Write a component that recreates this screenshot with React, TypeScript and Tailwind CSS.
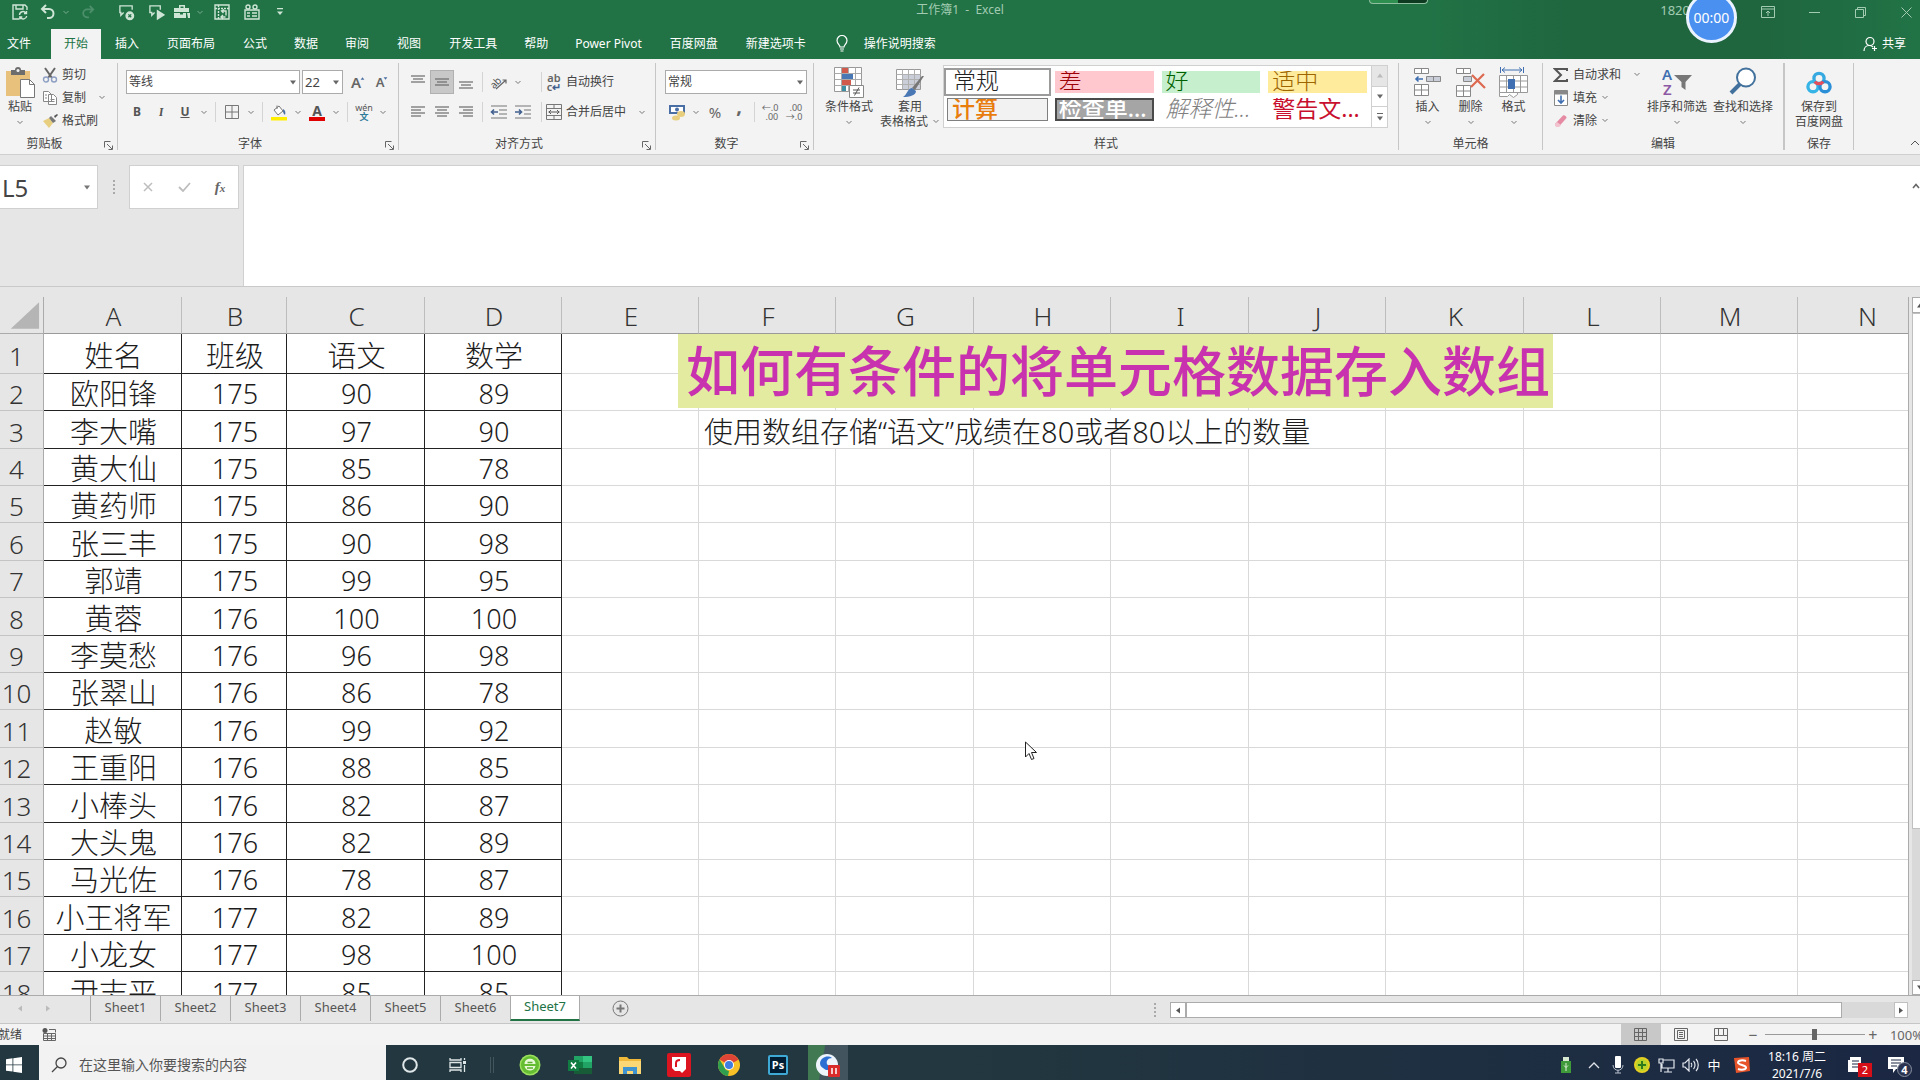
import React, { useState } from 'react';
import clsx from 'clsx';

const MENU_TABS = [
  '文件', '开始', '插入', '页面布局', '公式', '数据', '审阅', '视图',
  '开发工具', '帮助', 'Power Pivot', '百度网盘', '新建选项卡',
];

const COLUMNS = [
  { name: 'A', width: 138 },
  { name: 'B', width: 105 },
  { name: 'C', width: 138 },
  { name: 'D', width: 137 },
  { name: 'E', width: 137 },
  { name: 'F', width: 137 },
  { name: 'G', width: 138 },
  { name: 'H', width: 137 },
  { name: 'I', width: 138 },
  { name: 'J', width: 137 },
  { name: 'K', width: 138 },
  { name: 'L', width: 137 },
  { name: 'M', width: 137 },
  { name: 'N', width: 138 },
];

const ROWS = [
  ['姓名', '班级', '语文', '数学'],
  ['欧阳锋', '175', '90', '89'],
  ['李大嘴', '175', '97', '90'],
  ['黄大仙', '175', '85', '78'],
  ['黄药师', '175', '86', '90'],
  ['张三丰', '175', '90', '98'],
  ['郭靖', '175', '99', '95'],
  ['黄蓉', '176', '100', '100'],
  ['李莫愁', '176', '96', '98'],
  ['张翠山', '176', '86', '78'],
  ['赵敏', '176', '99', '92'],
  ['王重阳', '176', '88', '85'],
  ['小棒头', '176', '82', '87'],
  ['大头鬼', '176', '82', '89'],
  ['马光佐', '176', '78', '87'],
  ['小王将军', '177', '82', '89'],
  ['小龙女', '177', '98', '100'],
  ['尹志平', '177', '85', '85'],
];

const SHEETS = ['Sheet1', 'Sheet2', 'Sheet3', 'Sheet4', 'Sheet5', 'Sheet6', 'Sheet7'];

const Caret = ({ className }: { className?: string }) => (
  <svg viewBox="0 0 8 5" className={clsx('h-[5px] w-2 shrink-0', className)} fill="none" stroke="currentColor">
    <path d="M1.5 1L4 3.5L6.5 1" />
  </svg>
);

const Triangle = ({ className }: { className?: string }) => (
  <svg viewBox="0 0 8 5" className={clsx('h-[5px] w-2 shrink-0', className)} fill="currentColor">
    <path d="M1 0.5h6L4 4.5z" />
  </svg>
);

const Separator = ({ className }: { className?: string }) => (
  <span className={clsx('h-5 w-px shrink-0 bg-[#d4d4d4]', className)} />
);

interface GroupProps {
  label: string;
  className?: string;
  launcher?: boolean;
  children: React.ReactNode;
}

function Group({ label, className, launcher, children }: GroupProps) {
  return (
    <section aria-label={label} className={clsx('flex shrink-0 flex-col border-r border-[#c6c6c6]', className)}>
      <div className="flex h-[69px]">{children}</div>
      <div className={clsx('relative flex h-[18px] items-center justify-center pt-[5px] text-[#444]', launcher && 'pr-4')}>
        {label}
        {launcher && (
          <button aria-label={`${label}设置`} className="absolute right-1 bottom-0">
            <svg viewBox="0 0 9 9" className="size-[9px]" fill="none" stroke="#666">
              <path d="M0.5 6.5V0.5H6.5M3 3l5 5M8.5 4.5v4h-4" />
            </svg>
          </button>
        )}
      </div>
    </section>
  );
}

interface IconButtonProps {
  label: string;
  className?: string;
  children: React.ReactNode;
}

const IconButton = ({ label, className, children }: IconButtonProps) => (
  <button aria-label={label} className={clsx('flex h-6 w-6 shrink-0 items-center justify-center', className)}>
    {children}
  </button>
);

const CaretButton = ({ label }: { label: string }) => (
  <button aria-label={label} className="flex h-6 w-[14px] shrink-0 items-center justify-center text-[#777]">
    <Caret />
  </button>
);

interface BigButtonProps {
  icon: React.ReactNode;
  lines: string[];
  caret?: boolean;
  className?: string;
}

function BigButton({ icon, lines, caret = true, className }: BigButtonProps) {
  return (
    <button className={clsx('flex shrink-0 flex-col items-center pt-1 leading-[15px] whitespace-nowrap', className)}>
      <span className="flex h-8 items-start justify-center">{icon}</span>
      <span>{lines[0]}</span>
      {lines[1] ? (
        <span className="flex items-center gap-1">
          {lines[1]}
          {caret && <Caret className="text-[#777]" />}
        </span>
      ) : (
        caret && <Caret className="mt-[6px] text-[#777]" />
      )}
    </button>
  );
}

/* Horizontal text lines used by the alignment buttons: each entry is x1, x2, y */
const Lines = ({ lines }: { lines: number[][] }) => (
  <svg viewBox="0 0 16 16" className="size-4" stroke="#6b6b6b" strokeWidth="1.2">
    {lines.map(([a, b, y]) => (
      <line key={y} x1={a} x2={b} y1={y} y2={y} />
    ))}
  </svg>
);

function TitleBar() {
  return (
    <div className="flex h-[29px] pb-[5px] text-[#cfe5d6]">
      <div className="flex flex-1 items-center">
        <IconButton label="保存" className="ml-2">
          <svg viewBox="0 0 16 16" className="size-4" fill="none" stroke="currentColor" strokeWidth="1.4">
            <path d="M7 15H1V1h12l2 2v3M4 1v4h7V1" />
            <path d="M7.5 11a3.5 3.5 0 0 1 6.3-2M14.5 7v2.5H12M14.7 12a3.5 3.5 0 0 1-6.3 1.5M7.8 15.5V13h2.5" />
          </svg>
        </IconButton>
        <IconButton label="撤消" className="ml-1">
          <svg viewBox="0 0 16 16" className="size-4" fill="none" stroke="currentColor" strokeWidth="2">
            <path d="M6 1L2 5l4 4M2 5h7a4.5 4.5 0 0 1 0 9H7" />
          </svg>
        </IconButton>
        <Caret className="ml-[2px] opacity-50" />
        <IconButton label="恢复" className="ml-[6px] opacity-25">
          <svg viewBox="0 0 16 16" className="size-[14px]" fill="none" stroke="currentColor" strokeWidth="2">
            <path d="M10 1l4 4-4 4M14 5H7a4.5 4.5 0 0 0 0 9h2" />
          </svg>
        </IconButton>
        <IconButton label="删除批注" className="ml-[14px]">
          <svg viewBox="0 0 18 18" className="size-[17px]" fill="none" stroke="currentColor" strokeWidth="1.4">
            <path d="M6 9L3 12V9H2V2h13v4" />
            <circle cx="12.5" cy="12.5" r="4" fill="currentColor" />
            <path d="M11 11l3 3M14 11l-3 3" stroke="#217346" />
          </svg>
        </IconButton>
        <IconButton label="下一条批注" className="ml-[6px]">
          <svg viewBox="0 0 18 18" className="size-[17px]" fill="none" stroke="currentColor" strokeWidth="1.4">
            <path d="M7 9l-3 3V9H2V2h11v4" />
            <path d="M10 7v9l7-4.500z" fill="currentColor" />
          </svg>
        </IconButton>
        <IconButton label="工具箱" className="ml-[2px]">
          <svg viewBox="0 0 18 16" className="h-4 w-[18px]" fill="currentColor">
            <path d="M6 1h6v3h-1.500V2.500h-3V4H6zM1 4h15v4H1zM1 9h6v1.500h3V9h3v5H1zM14 9h3v5h-2z" />
          </svg>
        </IconButton>
        <Caret className="ml-[2px] opacity-50" />
        <IconButton label="数据透视表" className="ml-[6px]">
          <svg viewBox="0 0 16 16" className="size-4" fill="none" stroke="currentColor" strokeWidth="1.4">
            <path d="M1 1h14v14H1z" />
            <path d="M1 4.500h14M4.500 1v14" strokeDasharray="2 1" />
            <path d="M7.500 7h4.500v4.500M7 13h4.500M10 5.500l-2.500 1.500 2 2M9 11l-2 2 2 2" />
          </svg>
        </IconButton>
        <IconButton label="选项卡" className="ml-[6px]">
          <svg viewBox="0 0 16 16" className="size-4" fill="none" stroke="currentColor" strokeWidth="1.4">
            <path d="M1 6h14v9H1zM3 9h3M3 12h3M8 9h5M8 12h5" />
            <circle cx="4" cy="3" r="2" />
            <circle cx="11" cy="3" r="2" />
          </svg>
        </IconButton>
        <IconButton label="自定义快速访问工具栏" className="ml-1">
          <svg viewBox="0 0 8 8" className="size-2" fill="currentColor">
            <path d="M1 0h6v1.300H1zM1 3.500h6L4 7z" />
          </svg>
        </IconButton>
      </div>
      <h1 className="self-center pb-[5px] text-[#a3cbb2]">工作簿1&nbsp; -&nbsp; Excel</h1>
      <div className="flex flex-1 items-center justify-end text-[#a3cbb2]">
        <span className="mr-[66px] pb-[5px] text-[13px]">1820</span>
        <IconButton label="功能区显示选项" className="mr-[22px]">
          <svg viewBox="0 0 14 12" className="h-3 w-[14px]" fill="none" stroke="currentColor">
            <path d="M0.500 0.500h13v11H0.500zM0.500 3h13M7 10V5M5 7l2-2 2 2" />
          </svg>
        </IconButton>
        <IconButton label="最小化" className="mr-[22px]">
          <span className="h-px w-[11px] bg-current" />
        </IconButton>
        <IconButton label="还原" className="mr-[22px]">
          <svg viewBox="0 0 11 11" className="size-[11px]" fill="none" stroke="currentColor">
            <path d="M0.500 2.500h8v8h-8zM2.500 2.500v-2h8v8h-2" />
          </svg>
        </IconButton>
        <IconButton label="关闭" className="mr-[2px]">
          <svg viewBox="0 0 11 11" className="size-[11px]" stroke="currentColor">
            <path d="M0.500 0.500l10 10M10.500 0.500l-10 10" />
          </svg>
        </IconButton>
      </div>
    </div>
  );
}

interface MenuTabsProps {
  activeTab: string;
  setActiveTab: (tab: string) => void;
}

function MenuTabs({ activeTab, setActiveTab }: MenuTabsProps) {
  return (
    <nav className="flex h-[30px] items-stretch pr-[14px] text-white">
      {MENU_TABS.map((tab, i) => (
        <button
          key={tab}
          onClick={() => setActiveTab(tab)}
          className={clsx(
            'shrink-0 pb-px',
            i === 0 ? 'pr-5 pl-[7px]' : i % 4 === 1 ? 'px-[13px]' : 'px-[14px]',
            tab === activeTab && 'bg-[#f3f3f3] text-[#217346]',
          )}
        >
          {tab}
        </button>
      ))}
      <button className="ml-4 flex items-center gap-4 pb-px">
        <svg viewBox="0 0 12 17" className="h-[17px] w-3" fill="none" stroke="currentColor" strokeWidth="1.2">
          <path d="M4 12c0-2-3-3-3-6.500a5 5 0 0 1 10 0C11 9 8 10 8 12zM4 14h4M4.500 16h3" />
        </svg>
        操作说明搜索
      </button>
      <button className="ml-auto flex items-center gap-1 pb-px">
        <svg viewBox="0 0 15 16" className="h-4 w-[15px]" fill="none" stroke="currentColor" strokeWidth="1.2">
          <circle cx="7" cy="5.500" r="4" />
          <path d="M1 15c0-3 2-5.500 5-5.500 2 0 3 .5 4 1.500M11.500 10v5M9 12.500h5" />
        </svg>
        共享
      </button>
    </nav>
  );
}

function ClipboardGroup() {
  return (
    <Group label="剪贴板" launcher className="-ml-3 w-[130px]">
      <BigButton
        lines={['粘贴']}
        className="ml-[14px] w-9"
        icon={
          <svg viewBox="0 0 30 31" className="h-[31px] w-[30px]">
            <path d="M1 4h24v25H1z" fill="#e8c27c" />
            <path d="M6 3h4a3 3 0 0 1 6 0h4v5H6z" fill="#6d6d6d" />
            <circle cx="13" cy="3.500" r="1.500" fill="#f3f3f3" />
            <path d="M15.500 12.500h9l5 5v13h-14z" fill="#fff" stroke="#777" />
            <path d="M24.500 12.500v5h5" fill="none" stroke="#777" />
          </svg>
        }
      />
      <div className="ml-1 flex flex-col">
        <button className="flex h-[23px] items-center gap-1">
          <svg viewBox="0 0 16 16" className="size-4" fill="none" strokeWidth="1.4">
            <path d="M3 1l7 10M13 1L6 11" stroke="#666" strokeWidth="2" />
            <circle cx="4" cy="12.500" r="2.500" stroke="#8e9fc4" />
            <circle cx="12" cy="12.500" r="2.500" stroke="#8e9fc4" />
          </svg>
          剪切
        </button>
        <button className="flex h-[23px] items-center gap-1">
          <svg viewBox="0 0 16 16" className="size-4" fill="#fff" stroke="#888">
            <path d="M1.500 1.500h5l3 3v7h-8zM6.500 4.500h5l3 3v7h-8z" />
            <path d="M3 5h2M3 8h2M8.500 9.500h4M8.500 11.500h4" />
          </svg>
          复制
          <Caret className="ml-2 text-[#777]" />
        </button>
        <button className="flex h-[23px] items-center gap-1">
          <svg viewBox="0 0 16 16" className="size-4">
            <path d="M1 8l6-3 4 5-4 5z" fill="#e8cf80" />
            <path d="M7 5l2-2 5 5-3 2z" fill="#777" />
            <path d="M12 3l3-2 1 1-3 3z" fill="#555" />
          </svg>
          格式刷
        </button>
      </div>
    </Group>
  );
}

function FontGroup() {
  return (
    <Group label="字体" launcher className="w-[281px]">
      <div className="flex flex-col pt-1 pl-2">
        <div className="flex h-[30px] items-center">
          <div className="relative flex items-center">
            <select aria-label="字体" className="h-6 w-[174px] appearance-none border border-[#ababab] bg-white pl-[2px]">
              <option>等线</option>
            </select>
            <Triangle className="pointer-events-none absolute right-[3px] text-[#666]" />
          </div>
          <div className="relative ml-[2px] flex items-center">
            <select aria-label="字号" className="h-6 w-[41px] appearance-none border border-[#ababab] bg-white pl-[2px] text-[13px]">
              <option>22</option>
            </select>
            <Triangle className="pointer-events-none absolute right-[3px] text-[#666]" />
          </div>
          <IconButton label="增大字号" className="ml-[3px] text-[15px] font-semibold text-[#666]">
            A<Triangle className="mb-2 -ml-px h-[3px] w-[5px] rotate-180 text-[#4a6fa5]" />
          </IconButton>
          <IconButton label="减小字号" className="text-[13px] font-semibold text-[#666]">
            A<Triangle className="mb-2 -ml-px h-[3px] w-[5px] text-[#4a6fa5]" />
          </IconButton>
        </div>
        <div className="-ml-px flex h-[30px] items-center text-[#555]">
          <IconButton label="加粗"><b>B</b></IconButton>
          <IconButton label="倾斜" className="font-serif"><i className="font-bold">I</i></IconButton>
          <IconButton label="下划线"><b className="underline">U</b></IconButton>
          <CaretButton label="下划线选项" />
          <Separator className="mx-1" />
          <IconButton label="边框">
            <svg viewBox="0 0 14 14" className="size-[14px]" fill="none" stroke="#777">
              <path d="M0.500 0.500h13v13H0.500zM7 0.500v13M0.500 7h13" />
            </svg>
          </IconButton>
          <CaretButton label="边框选项" />
          <Separator className="mx-1" />
          <IconButton label="填充颜色">
            <svg viewBox="0 0 16 17" className="h-[17px] w-4">
              <path d="M3 6l5-4 4 5-5 4z" fill="#fff" stroke="#777" />
              <path d="M6 5V1.500" stroke="#777" />
              <path d="M12 5c2 1 3 3 2 6-1-1-2-2-2-4z" fill="#4a6fa5" />
              <path d="M0 13h16v3.500H0z" fill="#ffee00" />
            </svg>
          </IconButton>
          <CaretButton label="填充颜色选项" />
          <IconButton label="字体颜色">
            <span className="flex flex-col items-center">
              <b className="text-[14px] leading-[13px]">A</b>
              <span className="h-1 w-4 bg-[#e00000]" />
            </span>
          </IconButton>
          <CaretButton label="字体颜色选项" />
          <Separator className="mx-1" />
          <IconButton label="拼音">
            <span className="flex flex-col items-center text-[9px] leading-[9px]">
              <span>wén</span>
              <span className="font-bold text-[#2e7c9a]">文</span>
            </span>
          </IconButton>
          <CaretButton label="拼音选项" />
        </div>
      </div>
    </Group>
  );
}

function AlignmentGroup() {
  return (
    <Group label="对齐方式" launcher className="w-[257px]">
      <div className="flex flex-col pt-1 pl-[7px]">
        <div className="flex h-[30px] items-center">
          <IconButton label="顶端对齐"><Lines lines={[[1, 15, 2], [3, 13, 5], [1, 15, 8]]} /></IconButton>
          <IconButton label="垂直居中" className="border border-[#b0b0b0] bg-[#c8c8c8]"><Lines lines={[[1, 15, 5], [3, 13, 8], [1, 15, 11]]} /></IconButton>
          <IconButton label="底端对齐"><Lines lines={[[1, 15, 8], [3, 13, 11], [1, 15, 14]]} /></IconButton>
          <Separator className="mx-1" />
          <IconButton label="方向">
            <svg viewBox="0 0 18 16" className="h-4 w-[18px]" fill="none" stroke="#666" strokeWidth="1.2">
              <path d="M6 15L16 6M12.500 6H16v3.500" />
              <text x="0" y="12" transform="rotate(-45 6 9)" fontSize="10" fill="#555" stroke="none">ab</text>
            </svg>
          </IconButton>
          <CaretButton label="方向选项" />
          <Separator className="mr-1 ml-4" />
        </div>
        <div className="flex h-[30px] items-center">
          <IconButton label="左对齐"><Lines lines={[[1, 15, 3], [1, 11, 6], [1, 15, 9], [1, 11, 12]]} /></IconButton>
          <IconButton label="居中"><Lines lines={[[1, 15, 3], [3, 13, 6], [1, 15, 9], [3, 13, 12]]} /></IconButton>
          <IconButton label="右对齐"><Lines lines={[[1, 15, 3], [5, 15, 6], [1, 15, 9], [5, 15, 12]]} /></IconButton>
          <Separator className="mx-1" />
          <IconButton label="减少缩进量">
            <svg viewBox="0 0 18 14" className="h-[14px] w-[18px]" stroke="#777" strokeWidth="1.2" fill="none">
              <path d="M1 1h16M9 5h8M9 9h8M1 13h16" />
              <path d="M8 7H1.500M4 4.500L1.500 7 4 9.500" stroke="#41608f" strokeWidth="1.6" />
            </svg>
          </IconButton>
          <IconButton label="增加缩进量">
            <svg viewBox="0 0 18 14" className="h-[14px] w-[18px]" stroke="#777" strokeWidth="1.2" fill="none">
              <path d="M1 1h16M10 5h7M10 9h7M1 13h16" />
              <path d="M1 7h6.500M5 4.500L7.500 7 5 9.500" stroke="#41608f" strokeWidth="1.6" />
            </svg>
          </IconButton>
          <Separator className="mr-1 ml-auto" />
        </div>
      </div>
      <div className="flex flex-col pt-1">
        <button className="flex h-[30px] items-center gap-1">
          <span className="flex w-4 flex-col text-[11px] leading-[9px] font-semibold text-[#666]">
            <span>ab</span>
            <span>c<span className="text-[#41608f]">↵</span></span>
          </span>
          自动换行
        </button>
        <button className="flex h-[30px] items-center gap-1">
          <svg viewBox="0 0 16 16" className="size-4" fill="none" stroke="#777">
            <path d="M0.500 0.500h15v15h-15zM0.500 4.500h15M0.500 11.500h15M8 0.500v4M8 11.500v4" />
            <path d="M2.500 8h11M5 6L3 8l2 2M11 6l2 2-2 2" stroke="#555" />
          </svg>
          合并后居中
          <Caret className="ml-2 text-[#777]" />
        </button>
      </div>
    </Group>
  );
}

function NumberGroup() {
  return (
    <Group label="数字" launcher className="w-[158px]">
      <div className="flex flex-col pt-1 pl-[9px]">
        <div className="relative flex h-[30px] items-center">
          <select aria-label="数字格式" className="h-6 w-[142px] appearance-none border border-[#ababab] bg-white pl-[2px]">
            <option>常规</option>
          </select>
          <Triangle className="pointer-events-none absolute right-[3px] text-[#666]" />
        </div>
        <div className="flex h-[30px] items-center text-[#666]">
          <IconButton label="会计数字格式">
            <svg viewBox="0 0 18 17" className="h-[17px] w-[18px]">
              <path d="M1 1h16v9H1z" fill="#4a6fa5" />
              <path d="M3 3h12v5H3z" fill="#fff" />
              <circle cx="9" cy="5.500" r="2" fill="#4a6fa5" />
              <ellipse cx="13" cy="10" rx="4" ry="3" fill="#e8cf80" />
              <ellipse cx="8" cy="14" rx="4" ry="2.500" fill="#e8cf80" />
            </svg>
          </IconButton>
          <CaretButton label="会计格式选项" />
          <IconButton label="百分比样式" className="text-[15px]">%</IconButton>
          <IconButton label="千位分隔样式" className="pb-3 text-[20px] font-bold">,</IconButton>
          <Separator className="mx-[3px]" />
          <IconButton label="增加小数位数">
            <span className="flex flex-col items-end text-[9px] leading-[9px]"><span>←.0</span><span>.00</span></span>
          </IconButton>
          <IconButton label="减少小数位数">
            <span className="flex flex-col items-end text-[9px] leading-[9px]"><span>.00</span><span>→.0</span></span>
          </IconButton>
        </div>
      </div>
    </Group>
  );
}

function StylesGroup() {
  return (
    <Group label="样式" className="w-[585px]">
      <BigButton
        lines={['条件格式']}
        className="ml-[6px] w-[58px]"
        icon={
          <svg viewBox="0 0 30 31" className="h-[31px] w-[30px]">
            <path d="M0.500 0.500h27v24h-27z" fill="#fff" stroke="#999" />
            <path d="M0.500 6.500h27M0.500 12.500h27M0.500 18.500h27M7.500 0.500v24M14.500 0.500v24M21.500 0.500v24" stroke="#aaa" />
            <path d="M8 1h6v5H8zM8 13h9v5H8z" fill="#d05a4c" />
            <path d="M8 7h11v5H8z" fill="#4a78b5" />
            <path d="M8 19h4v5H8z" fill="#3d8fa3" />
            <path d="M15.500 18.500h14v12h-14z" fill="#fff" stroke="#888" />
            <path d="M19 23h7M19 26h7M25 20.500l-4.500 8" stroke="#555" />
          </svg>
        }
      />
      <BigButton
        lines={['套用', '表格格式']}
        className="ml-[2px] w-[60px]"
        icon={
          <svg viewBox="0 0 30 31" className="h-[31px] w-[30px]">
            <path d="M1.500 2.500h24v20h-24z" fill="#fff" stroke="#999" />
            <path d="M7 7h18v15H7z" fill="#c9ced9" />
            <path d="M1.500 7.500h24M1.500 12.500h24M1.500 17.500h24M7.500 2.500v20M13.500 2.500v20M19.500 2.500v20" stroke="#b0b0b0" />
            <path d="M29 9l-9 14-3-2L27 9z" fill="#777" />
            <path d="M17 21l4 3c0 4-6 6-13 6 4-2 4-8 9-9z" fill="#4a78b5" />
          </svg>
        }
      />
      <div className="mt-[2px] mr-[10px] ml-[3px] flex h-[63px] min-w-0 flex-1 self-start border border-[#d0d0d0] bg-white">
        <div className="grid flex-1 grid-cols-4 grid-rows-2 text-[23px] leading-[20px] font-light">
          <button className="mt-[2px] flex h-[28px] items-center overflow-hidden border-2 border-[#9b9b9b] pb-1 pl-[7px] text-[#222]">常规</button>
          <button className="mx-1 mt-[5px] flex h-[22px] items-center overflow-hidden bg-[#ffc7ce] pb-1 pl-1 text-[#9c0006]">差</button>
          <button className="mx-1 mt-[5px] flex h-[22px] items-center overflow-hidden bg-[#c6efce] pb-1 pl-1 text-[#006100]">好</button>
          <button className="mx-1 mt-[5px] flex h-[22px] items-center overflow-hidden bg-[#ffeb9c] pb-1 pl-1 text-[#9c6500]">适中</button>
          <button className="mx-[3px] mt-px flex h-[23px] items-center overflow-hidden border border-[#7f7f7f] bg-[#f2f2f2] pb-[2px] pl-1 font-medium text-[#e87d0e]">计算</button>
          <button className="mx-1 mt-px flex h-[23px] items-center overflow-hidden border-2 border-[#4a4a4a] bg-[#a5a5a5] pb-[2px] pl-[2px] font-medium whitespace-nowrap text-white">检查单...</button>
          <button className="mx-1 mt-px flex h-[23px] items-center overflow-hidden pb-[2px] pl-1 whitespace-nowrap text-[#7f7f7f] italic">解释性...</button>
          <button className="mx-1 mt-px flex h-[23px] items-center overflow-hidden pb-[2px] pl-1 font-normal whitespace-nowrap text-[#c8102e]">警告文...</button>
        </div>
        <div className="flex w-4 flex-col divide-y divide-[#d0d0d0] border-l border-[#d0d0d0] text-[#666]">
          <button aria-label="上一行" className="flex flex-1 items-center justify-center bg-[#e6e6e6] text-[#bbb]"><Triangle className="rotate-180" /></button>
          <button aria-label="下一行" className="flex flex-1 items-center justify-center"><Triangle /></button>
          <button aria-label="其他" className="flex flex-1 flex-col items-center justify-center gap-[2px]"><span className="h-px w-[6px] bg-current" /><Triangle /></button>
        </div>
      </div>
    </Group>
  );
}

function CellsGroup() {
  return (
    <Group label="单元格" className="w-[144px]">
      <BigButton
        lines={['插入']}
        className="ml-[7px] w-[43px]"
        icon={
          <svg viewBox="0 0 27 30" className="h-[30px] w-[27px]" fill="#fff" stroke="#888">
            <path d="M0.500 1.500h14v5h-14zM7.500 1.500v5M0.500 17.500h14v11h-14zM7.500 17.500v11M0.500 23h14" />
            <path d="M12.500 9.500h14v5h-14zM19.500 9.500v5" fill="#c9ced9" />
            <path d="M9 12H2M4.500 9.500L2 12l2.500 2.500" fill="none" stroke="#3f6fb0" strokeWidth="1.6" />
          </svg>
        }
      />
      <BigButton
        lines={['删除']}
        className="w-[43px]"
        icon={
          <svg viewBox="0 0 30 30" className="h-[30px] w-[30px]" fill="#fff" stroke="#888">
            <path d="M0.500 1.500h14v5h-14zM7.500 1.500v5M0.500 18.500h14v11h-14zM7.500 18.500v11M0.500 24h14" />
            <path d="M7.500 9.500h8v5h-8z" fill="#c9ced9" />
            <path d="M16 8l13 13M28 7L15 20" stroke="#dd6a50" strokeWidth="2.2" />
          </svg>
        }
      />
      <BigButton
        lines={['格式']}
        className="w-[43px]"
        icon={
          <svg viewBox="0 0 29 31" className="h-[31px] w-[29px]" fill="#fff" stroke="#999">
            <path d="M0.500 8.500h28v17h-28zM0.500 14h28M0.500 20h28M7.500 8.500v17M14.500 8.500v17M21.500 8.500v17M0.500 25.500v4h8l2-2 4 3 4-3v-2" />
            <path d="M9 12h7v10H9z" fill="#3f6fb0" stroke="none" />
            <path d="M3 3h20M6 0.500L3 3l3 2.500M20 0.500L23 3l-3 2.500M1.500 0v6M24.500 0v6" fill="none" stroke="#3f6fb0" />
          </svg>
        }
      />
    </Group>
  );
}

function EditingGroup() {
  return (
    <Group label="编辑" className="w-[241px]">
      <div className="ml-[10px] flex w-[91px] flex-col">
        <button className="flex h-[23px] items-center gap-1">
          <svg viewBox="0 0 16 16" className="size-4" fill="none" stroke="#555" strokeWidth="2">
            <path d="M14 4V2H2l6 6-6 6h12v-2" />
          </svg>
          自动求和
          <Caret className="ml-2 text-[#777]" />
        </button>
        <button className="flex h-[23px] items-center gap-1">
          <svg viewBox="0 0 16 16" className="size-4" fill="#fff" stroke="#888">
            <path d="M1.500 0.500h13v15h-13z" />
            <path d="M1.500 1h13v3h-13z" fill="#888" />
            <path d="M8 5.500v7.500M5 10l3 3 3-3" fill="none" stroke="#3f6fb0" strokeWidth="1.6" />
          </svg>
          填充
          <Caret className="text-[#777]" />
        </button>
        <button className="flex h-[23px] items-center gap-1">
          <svg viewBox="0 0 16 16" className="size-4">
            <path d="M2 11l8-8.500c1-1 4 1 3.500 2.500L6 13.500H3z" fill="#e58aa2" />
            <path d="M2 11l2-2 4 3-2 2H3z" fill="#f2c3cf" />
          </svg>
          清除
          <Caret className="text-[#777]" />
        </button>
      </div>
      <BigButton
        lines={['排序和筛选']}
        className="w-[66px]"
        icon={
          <svg viewBox="0 0 30 30" className="h-[30px] w-[30px]" fontFamily="Noto Sans" fontWeight="600" fontSize="15">
            <text x="0" y="13" fill="#3f6fb0">A</text>
            <text x="1" y="28" fill="#8c5aa5">Z</text>
            <path d="M12 8h18l-6.500 7v8l-4-3v-5z" fill="#777" />
          </svg>
        }
      />
      <BigButton
        lines={['查找和选择']}
        className="w-[66px]"
        icon={
          <svg viewBox="0 0 28 28" className="h-[28px] w-[28px]" fill="#fff" stroke="#41719c">
            <path d="M11 17L2 26" strokeWidth="4" />
            <circle cx="17" cy="10.500" r="9" strokeWidth="2" />
          </svg>
        }
      />
    </Group>
  );
}

function Ribbon() {
  return (
    <div className="flex h-24 border-b border-[#cfcfcf] bg-[#f3f3f3] py-1 text-[#444]">
      <ClipboardGroup />
      <FontGroup />
      <AlignmentGroup />
      <NumberGroup />
      <StylesGroup />
      <CellsGroup />
      <EditingGroup />
      <Group label="保存" className="w-[70px] border-l">
        <BigButton
          lines={['保存到', '百度网盘']}
          caret={false}
          className="w-full"
          icon={
            <svg viewBox="0 0 28 26" className="mt-1 h-[24px] w-[28px]" fill="none" strokeWidth="3.600">
              <circle cx="14" cy="8" r="5.500" stroke="#36a9e1" />
              <circle cx="7.500" cy="17" r="5.500" stroke="#36b4e6" />
              <circle cx="20.500" cy="17" r="5.500" stroke="#2b8fd8" />
              <path d="M9.500 11.500c2 3 7 3 9 0" stroke="#e34d5c" />
            </svg>
          }
        />
      </Group>
      <button aria-label="折叠功能区" className="ml-auto self-end pb-1 text-[#555]">
        <svg viewBox="0 0 10 6" className="h-[6px] w-[10px]" fill="none" stroke="currentColor">
          <path d="M1 5l4-4 4 4" />
        </svg>
      </button>
    </div>
  );
}

function FormulaBar() {
  return (
    <div className="flex h-[132px] items-start border-b border-[#c9c9c9] bg-[#e6e6e6] pt-[10px]">
      <div className="relative flex items-center">
        <input
          aria-label="名称框"
          defaultValue="L5"
          className="h-11 w-[98px] border border-l-0 border-[#d0d0d0] bg-white pl-[2px] text-[24px] text-[#444] outline-none"
        />
        <Triangle className="absolute right-[7px] text-[#777]" />
      </div>
      <svg viewBox="0 0 3 16" className="mx-[14px] mt-[14px] h-4 w-[3px]" fill="#aaa">
        <path d="M1 1h2v2H1zM1 5h2v2H1zM1 9h2v2H1zM1 13h2v2H1z" />
      </svg>
      <div className="flex h-11 w-[110px] items-center justify-around border border-[#d0d0d0] bg-white text-[#bdbdbd]">
        <IconButton label="取消">
          <svg viewBox="0 0 10 10" className="size-[10px]" stroke="currentColor" strokeWidth="1.500"><path d="M1 1l8 8M9 1l-8 8" /></svg>
        </IconButton>
        <IconButton label="输入">
          <svg viewBox="0 0 13 10" className="h-[10px] w-[13px]" fill="none" stroke="currentColor" strokeWidth="1.800"><path d="M1 5l4 4 7-8" /></svg>
        </IconButton>
        <IconButton label="插入函数" className="font-['Liberation_Serif',serif] text-[15px] text-[#666] italic">
          <b>f<span className="text-[11px]">x</span></b>
        </IconButton>
      </div>
      <div className="relative ml-1 flex flex-1">
        <textarea aria-label="编辑栏" className="h-[121px] flex-1 resize-none border-t border-l border-[#d0d0d0] bg-white outline-none" />
        <button aria-label="折叠编辑栏" className="absolute top-[18px] right-0 text-[#666]">
          <svg viewBox="0 0 8 6" className="h-[6px] w-2" fill="none" stroke="currentColor" strokeWidth="1.600"><path d="M1 5l3-3.500L7 5" /></svg>
        </button>
      </div>
    </div>
  );
}

function Worksheet() {
  return (
    <div className="flex min-h-0 flex-1 bg-[#e6e6e6] pt-[10px]">
      <div className="relative min-w-0 flex-1 overflow-hidden border-r border-[#ababab]">
        <table className="w-max table-fixed border-separate border-spacing-0 bg-white text-[27px] leading-[30px] font-light text-[#1c1c1c]">
          <colgroup>
            <col className="w-11" />
            {COLUMNS.map((col) => (
              <col key={col.name} style={{ width: col.width }} />
            ))}
          </colgroup>
          <thead>
            <tr className="h-[37px] bg-[#e6e6e6] text-[26px] text-[#333]">
              <th aria-label="全选" className="w-11 border-r border-b border-[#ababab] p-0">
                <svg viewBox="0 0 44 36" className="h-9 w-[43px]"><path d="M40 5v27H11z" fill="#b5b5b5" /></svg>
              </th>
              {COLUMNS.map((col) => (
                <th key={col.name} scope="col" className="border-r border-b border-r-[#bdbdbd] border-b-[#9a9a9a] p-0 pt-[2px] pl-[2px] font-light">
                  {col.name}
                </th>
              ))}
            </tr>
          </thead>
          <tbody>
            {ROWS.map((row, i) => (
              <tr key={row[0]} className={i === 0 ? 'h-10' : i % 5 === 0 || i % 5 === 2 ? 'h-[38px]' : 'h-[37px]'}>
                <th scope="row" className="border-r border-b border-[#c4c4c4] border-r-[#ababab] bg-[#e6e6e6] p-0 pt-1 pr-[10px] text-[26px] font-light text-[#333]">
                  <span className="flex justify-center">{i + 1}</span>
                </th>
                {row.map((cell, j) => (
                  <td key={j} className={clsx('border-r border-b border-[#222] p-0 pt-1 pl-[2px] text-center whitespace-nowrap', /\d/.test(cell) ? '' : 'text-[29px]')}>
                    {cell}
                  </td>
                ))}
                {COLUMNS.slice(4).map((col, j) => {
                  // the note in F3 runs across to column J
                  if (i === 2 && j > 1 && j < 6) return null;
                  if (i === 2 && j === 1) {
                    return (
                      <td key={col.name} colSpan={5} className="border-r border-b border-[#d9d9d9] p-0 pt-1 pl-[5px] text-[29px] whitespace-nowrap">
                        使用数组存储“语文”成绩在80或者80以上的数量
                      </td>
                    );
                  }
                  return <td key={col.name} className="border-r border-b border-[#d9d9d9] p-0" />;
                })}
              </tr>
            ))}
          </tbody>
        </table>
        <div className="absolute top-[37px] left-[678px] flex h-[74px] items-center bg-[#e2eb9f] pr-[3px] pl-2 text-[54px] font-medium whitespace-nowrap text-[#c832ae]">
          如何有条件的将单元格数据存入数组
        </div>
        <svg viewBox="0 0 12 19" className="absolute top-[444px] left-[1025px] h-[19px] w-3" fill="#fff" stroke="#222">
          <path d="M0.500 1v15l3.500-3.500 2.500 6 2.500-1-2.500-6h5z" />
        </svg>
      </div>
      <div className="ml-[3px] flex w-2 shrink-0 flex-col overflow-hidden bg-[#d9d9d9]">
        <button aria-label="向上滚动" className="flex h-4 w-4 items-center justify-center border border-[#ababab] bg-white text-[#555]"><Triangle className="rotate-180" /></button>
        <div className="h-[516px] w-4 shrink-0 border border-[#c0c0c0] bg-white" />
        <button aria-label="向下滚动" className="mt-auto flex h-[15px] w-4 items-center justify-center border border-[#ababab] bg-white text-[#555]"><Triangle /></button>
      </div>
    </div>
  );
}

function SheetBar() {
  const [activeSheet, setActiveSheet] = useState('Sheet7');

  return (
    <div className="flex h-7 shrink-0 items-start border-t border-[#ababab] bg-[#e6e6e6] text-[#555]">
      <div className="flex h-[25px] w-[90px] items-center gap-5 pl-4 text-[#bbb]">
        <Triangle className="rotate-90" />
        <Triangle className="-rotate-90" />
      </div>
      {SHEETS.map((sheet) => (
        <button
          key={sheet}
          onClick={() => setActiveSheet(sheet)}
          className={clsx(
            'h-[25px] w-[70px] border-l border-[#ababab] pb-1 text-[13px]',
            sheet === activeSheet && 'border-r border-b-2 border-b-[#217346] bg-white text-[#217346]',
          )}
        >
          {sheet}
        </button>
      ))}
      <button aria-label="新工作表" className="mt-1 ml-8 text-[#777]">
        <svg viewBox="0 0 17 17" className="size-[17px]" fill="none" stroke="currentColor">
          <circle cx="8.500" cy="8.500" r="7.500" />
          <path d="M8.500 4.500v8M4.500 8.500h8" strokeWidth="2" />
        </svg>
      </button>
      <svg viewBox="0 0 3 16" className="mt-[6px] ml-auto h-4 w-[3px]" fill="#aaa">
        <path d="M1 1h2v2H1zM1 5h2v2H1zM1 9h2v2H1zM1 13h2v2H1z" />
      </svg>
      <div className="mt-[6px] mr-3 ml-[14px] flex h-4 w-[738px] bg-[#d9d9d9]">
        <button aria-label="向左滚动" className="flex w-4 items-center justify-center border border-[#ababab] bg-white text-[#555]"><Triangle className="rotate-90" /></button>
        <div className="mr-[52px] flex-1 border border-[#ababab] bg-white" />
        <button aria-label="向右滚动" className="flex w-[14px] items-center justify-center border border-[#c0c0c0] bg-white text-[#555]"><Triangle className="-rotate-90" /></button>
      </div>
    </div>
  );
}

function StatusBar() {
  return (
    <div className="flex h-[22px] shrink-0 items-center overflow-hidden border-t border-[#c6c6c6] bg-[#f3f3f3] text-[#444]">
      <span className="-ml-[2px]">就绪</span>
      <svg viewBox="0 0 14 13" className="ml-5 h-[13px] w-[14px]" fill="none" stroke="#666">
        <path d="M1.500 5.500h12v7h-12zM1.500 8h12M1.500 10.500h12M5.500 5.500v7M9.500 5.500v7M7 1.500h6.500v3" />
        <circle cx="3" cy="2.500" r="2.500" fill="#555" stroke="none" />
      </svg>
      <div className="ml-auto flex h-full items-center text-[#666]">
        <button aria-label="普通视图" className="flex h-full w-10 items-center justify-center bg-[#c8c8c8]">
          <svg viewBox="0 0 13 13" className="size-[13px]" fill="none" stroke="currentColor"><path d="M0.500 0.500h12v12h-12zM4.500 0.500v12M8.500 0.500v12M0.500 4.500h12M0.500 8.500h12" /></svg>
        </button>
        <button aria-label="页面布局视图" className="flex h-full w-10 items-center justify-center">
          <svg viewBox="0 0 14 13" className="h-[13px] w-[14px]" fill="none" stroke="currentColor"><path d="M0.500 0.500h13v12h-13zM3.500 2.500h7v8h-7zM5 4.500h4M5 6.500h4M5 8.500h4" /></svg>
        </button>
        <button aria-label="分页预览" className="flex h-full w-10 items-center justify-center">
          <svg viewBox="0 0 14 13" className="h-[13px] w-[14px]" fill="none" stroke="currentColor"><path d="M0.500 0.500h13v12h-13zM4.500 0.500v7h5v-7M0.500 7.500h4M9.500 7.500h4" /></svg>
        </button>
        <button aria-label="缩小" className="w-6 text-[16px] leading-4">−</button>
        <input
          aria-label="显示比例"
          type="range"
          defaultValue={50}
          className="h-4 w-[100px] appearance-none bg-[linear-gradient(#9a9a9a,#9a9a9a)] bg-[length:100%_1px] bg-center bg-no-repeat [&::-webkit-slider-thumb]:h-[11px] [&::-webkit-slider-thumb]:w-[5px] [&::-webkit-slider-thumb]:appearance-none [&::-webkit-slider-thumb]:bg-[#666]"
        />
        <button aria-label="放大" className="w-4 text-[16px] leading-4">+</button>
        <span className="-mr-[3px] ml-[9px] text-[13px]">100%</span>
      </div>
    </div>
  );
}

function Taskbar() {
  return (
    <footer className="h-[35px] shrink-0 overflow-hidden">
      <div className="flex h-10 items-center bg-gradient-to-r from-[#22373f] from-50% to-[#1b2743] text-white">
        <button aria-label="开始" className="flex h-full w-[39px] items-center pl-[6px]">
          <svg viewBox="0 0 16 16" className="size-4" fill="#fff"><path d="M0 2.200l6.500-.9v6.200H0zM7.300 1.200L16 0v7.500H7.300zM0 8.300h6.500v6.300L0 13.700zM7.300 8.300H16V16l-8.700-1.200z" /></svg>
        </button>
        <label className="flex h-full w-[347px] items-center bg-[#f2f2f2] pl-[12px]">
          <svg viewBox="0 0 16 16" className="size-4" fill="none" stroke="#444" strokeWidth="1.300"><circle cx="10" cy="6" r="5" /><path d="M6.500 9.500L1 15" /></svg>
          <input aria-label="搜索" placeholder="在这里输入你要搜索的内容" className="ml-3 flex-1 bg-transparent text-[14px] outline-none placeholder:text-[#555]" />
        </label>
        <IconButton label="Cortana" className="ml-[12px]">
          <svg viewBox="0 0 16 16" className="size-4" fill="none" stroke="#dfe6e8" strokeWidth="2"><circle cx="8" cy="8" r="6.800" /></svg>
        </IconButton>
        <IconButton label="任务视图" className="ml-6">
          <svg viewBox="0 0 18 16" className="h-4 w-[18px]" fill="none" stroke="#dfe6e8" strokeWidth="1.300"><path d="M1 1v2h11V1M1 5.500h11v5H1zM1 15v-2h11v2M15.500 1v2M15.500 8v7" /><path d="M14 4h3v3h-3z" fill="#dfe6e8" stroke="none" /></svg>
        </IconButton>
        <span className="ml-5 h-4 w-[4px] border-x border-[#44565d]" />
        <IconButton label="浏览器" className="ml-6">
          <svg viewBox="0 0 22 22" className="size-[22px]"><circle cx="11" cy="11" r="10.500" fill="#9be05f" /><circle cx="11" cy="11" r="9" fill="#65bd32" /><path d="M5.500 10c0-7 11-7 11 0z" fill="#e8f9d8" /><path d="M5.500 12h11c-1 6-10 6-11 0z" fill="#e8f9d8" /><path d="M8.500 8.500h5M8 14h6" stroke="#5cb030" strokeWidth="1.500" /></svg>
        </IconButton>
        <IconButton label="Excel" className="ml-[26px]">
          <svg viewBox="0 0 24 20" className="h-5 w-6"><path d="M6 1h18v18H6z" fill="#21a366" /><path d="M15 1h9v6h-9z" fill="#33c481" /><path d="M6 7h9v6H6z" fill="#107c41" /><path d="M6 13h18v6H6z" fill="#185c37" /><path d="M0 5h11v11H0z" fill="#107c41" /><path d="M3 7.500l5 6M8 7.500l-5 6" stroke="#fff" strokeWidth="1.600" /></svg>
        </IconButton>
        <IconButton label="文件资源管理器" className="ml-[26px]">
          <svg viewBox="0 0 22 18" className="h-[18px] w-[22px]"><path d="M0 1h8l2 2h12v15H0z" fill="#f0b93a" /><path d="M0 5h22v13H0z" fill="#fbd775" /><path d="M4 18v-7h14v7h-4v-3H8v3z" fill="#3f93cf" /></svg>
        </IconButton>
        <IconButton label="录屏" className="ml-[25px]">
          <svg viewBox="0 0 24 24" className="size-6"><rect width="24" height="24" rx="2" fill="#dc1420" /><path d="M5 4h14v12l-4 4-2-2H8l-3-3z" fill="#fff" /><path d="M9 14V10c0-2 1.500-3 4-3" stroke="#dc1420" strokeWidth="2" fill="none" /></svg>
        </IconButton>
        <IconButton label="Chrome" className="ml-[26px]">
          <svg viewBox="0 0 22 22" className="size-[22px]"><circle cx="11" cy="11" r="11" fill="#f6c026" /><path d="M11 11L1.500 5.500A11 11 0 0 1 20.500 5.500z" fill="#de4536" /><path d="M20.500 5.500H11v5z" fill="#de4536" /><path d="M1.500 5.500L8 16l3 1-1 5A11 11 0 0 1 1.500 5.500z" fill="#2f9e4f" /><circle cx="11" cy="11" r="5" fill="#fff" /><circle cx="11" cy="11" r="4" fill="#3f7de0" /></svg>
        </IconButton>
        <IconButton label="Photoshop" className="ml-[25px]">
          <span className="flex size-5 items-center justify-center rounded-[2px] border-2 border-[#3fa9d6] bg-[#001d33] text-[11px] font-bold">Ps</span>
        </IconButton>
        <button aria-label="录制中" className="ml-[18px] flex h-full w-10 items-center justify-center bg-[linear-gradient(100deg,#417a52_35%,#42545e_38%)]">
          <svg viewBox="0 0 24 24" className="size-6"><circle cx="11" cy="12" r="11" fill="#eef4fb" /><path d="M4 10c1-6 8-8 12-5-4 0-6 3-5 6 1 2 4 3 7 2-4 5-8 5-11 2-2-1-3-3-3-5z" fill="#2d6fd2" /><rect x="12" y="12" width="12" height="12" rx="1" fill="#d92b2b" /><path d="M16 15v6M20 15v6" stroke="#fff" strokeWidth="1.500" /></svg>
        </button>
        <div className="ml-auto flex items-center">
          <IconButton label="USB">
            <svg viewBox="0 0 10 16" className="h-4 w-[10px]"><path d="M2 0h6v4H2z" fill="#d7e8d0" /><path d="M0 4h10v12H0z" fill="#3f9b3a" /><path d="M5 6v8M3 8.500l2 2 2-2" stroke="#dff0d8" fill="none" /></svg>
          </IconButton>
          <IconButton label="显示隐藏的图标" className="ml-1">
            <svg viewBox="0 0 12 8" className="h-2 w-3" fill="none" stroke="#dfe3ea" strokeWidth="1.300"><path d="M1 7l5-5 5 5" /></svg>
          </IconButton>
          <IconButton label="麦克风">
            <svg viewBox="0 0 12 18" className="h-[18px] w-3"><rect x="3" width="6" height="12" rx="1" fill="#fff" /><path d="M1 9c0 7 10 7 10 0M6 14v3M3 17h6" fill="none" stroke="#b8c0cc" /></svg>
          </IconButton>
          <IconButton label="安全卫士">
            <svg viewBox="0 0 16 16" className="size-4"><circle cx="8" cy="8" r="8" fill="#e5cf20" /><circle cx="8" cy="8" r="6" fill="#b9d32c" /><path d="M8 4v8M4 8h8" stroke="#2d7a1d" strokeWidth="2" /></svg>
          </IconButton>
          <IconButton label="网络">
            <svg viewBox="0 0 17 15" className="h-[15px] w-[17px]" fill="none" stroke="#e3e7ee" strokeWidth="1.200"><path d="M5 2h11v8H4V6M10 10v4M6 14h8M1 1h4v4H1zM3 5v9" /></svg>
          </IconButton>
          <IconButton label="音量">
            <svg viewBox="0 0 17 14" className="h-[14px] w-[17px]" fill="none" stroke="#e3e7ee" strokeWidth="1.200"><path d="M1 5h2l4-4v12L3 9H1zM9 5c1 1 1 3 0 4M11.500 3c2 2 2 6 0 8M14 1c3 3 3 9 0 12" /></svg>
          </IconButton>
          <button className="w-6 text-[13px]">中</button>
          <IconButton label="搜狗输入法" className="ml-1">
            <svg viewBox="0 0 16 16" className="size-4"><path d="M0 1l15-1 1 14-14 2z" fill="#e8542a" /><path d="M12 4c-3-1-8-1-8 1.500S12 8 12 10.500 7 13 4 12" fill="none" stroke="#fff" strokeWidth="2" /></svg>
          </IconButton>
          <div className="mx-3 w-[62px] text-center leading-[17px] whitespace-nowrap">
            <div>18:16 周二</div>
            <div>2021/7/6</div>
          </div>
          <button aria-label="便笺" className="relative ml-2 size-6">
            <svg viewBox="0 0 16 16" className="size-4" fill="#fff"><path d="M2 0h11v15H0V3h2z" /><path d="M4 4h7M4 7h7M4 10h7" stroke="#1b2743" /></svg>
            <span className="absolute right-0 bottom-0 flex size-[14px] items-center justify-center bg-[#d40f18] text-[11px]">2</span>
          </button>
          <button aria-label="通知" className="relative mr-2 ml-4 size-6">
            <svg viewBox="0 0 17 17" className="size-[17px]" fill="#fff"><path d="M0 0h16v12H8l-3 4v-4H0z" /><path d="M3 3h10M3 6h10M3 9h6" stroke="#1b2743" /></svg>
            <span className="absolute right-0 bottom-0 flex size-[15px] items-center justify-center rounded-full border border-[#8890a0] bg-[#2a3450] text-[11px] font-bold">4</span>
          </button>
        </div>
      </div>
    </footer>
  );
}

export default function App() {
  const [activeTab, setActiveTab] = useState('开始');

  return (
    <div
      lang="zh-CN"
      className="relative flex h-screen flex-col overflow-hidden font-['Noto_Sans','Noto_Sans_CJK_SC',sans-serif] text-[12px] leading-4"
    >
      <header className="shrink-0 bg-[linear-gradient(90deg,#217346_74%,#1f663f_82%,#1f663f_92%,#217346)]">
        <TitleBar />
        <MenuTabs activeTab={activeTab} setActiveTab={setActiveTab} />
      </header>
      {/* Recorder overlays: level meter and timer */}
      <div className="absolute top-0 right-[492px] h-1 w-[59px] rounded-b border border-t-0 border-[#8fbf9f] bg-[linear-gradient(90deg,#2f8f50_50%,#0d3a20_50%)]" />
      <div className="absolute -top-2 right-[183px] flex size-[51px] items-center justify-center rounded-full border-[3px] border-[#eaf3ff] bg-[#4a90f0] text-[14px] text-white">
        00:00
      </div>
      <Ribbon />
      <FormulaBar />
      <Worksheet />
      <SheetBar />
      <StatusBar />
      <Taskbar />
    </div>
  );
}
